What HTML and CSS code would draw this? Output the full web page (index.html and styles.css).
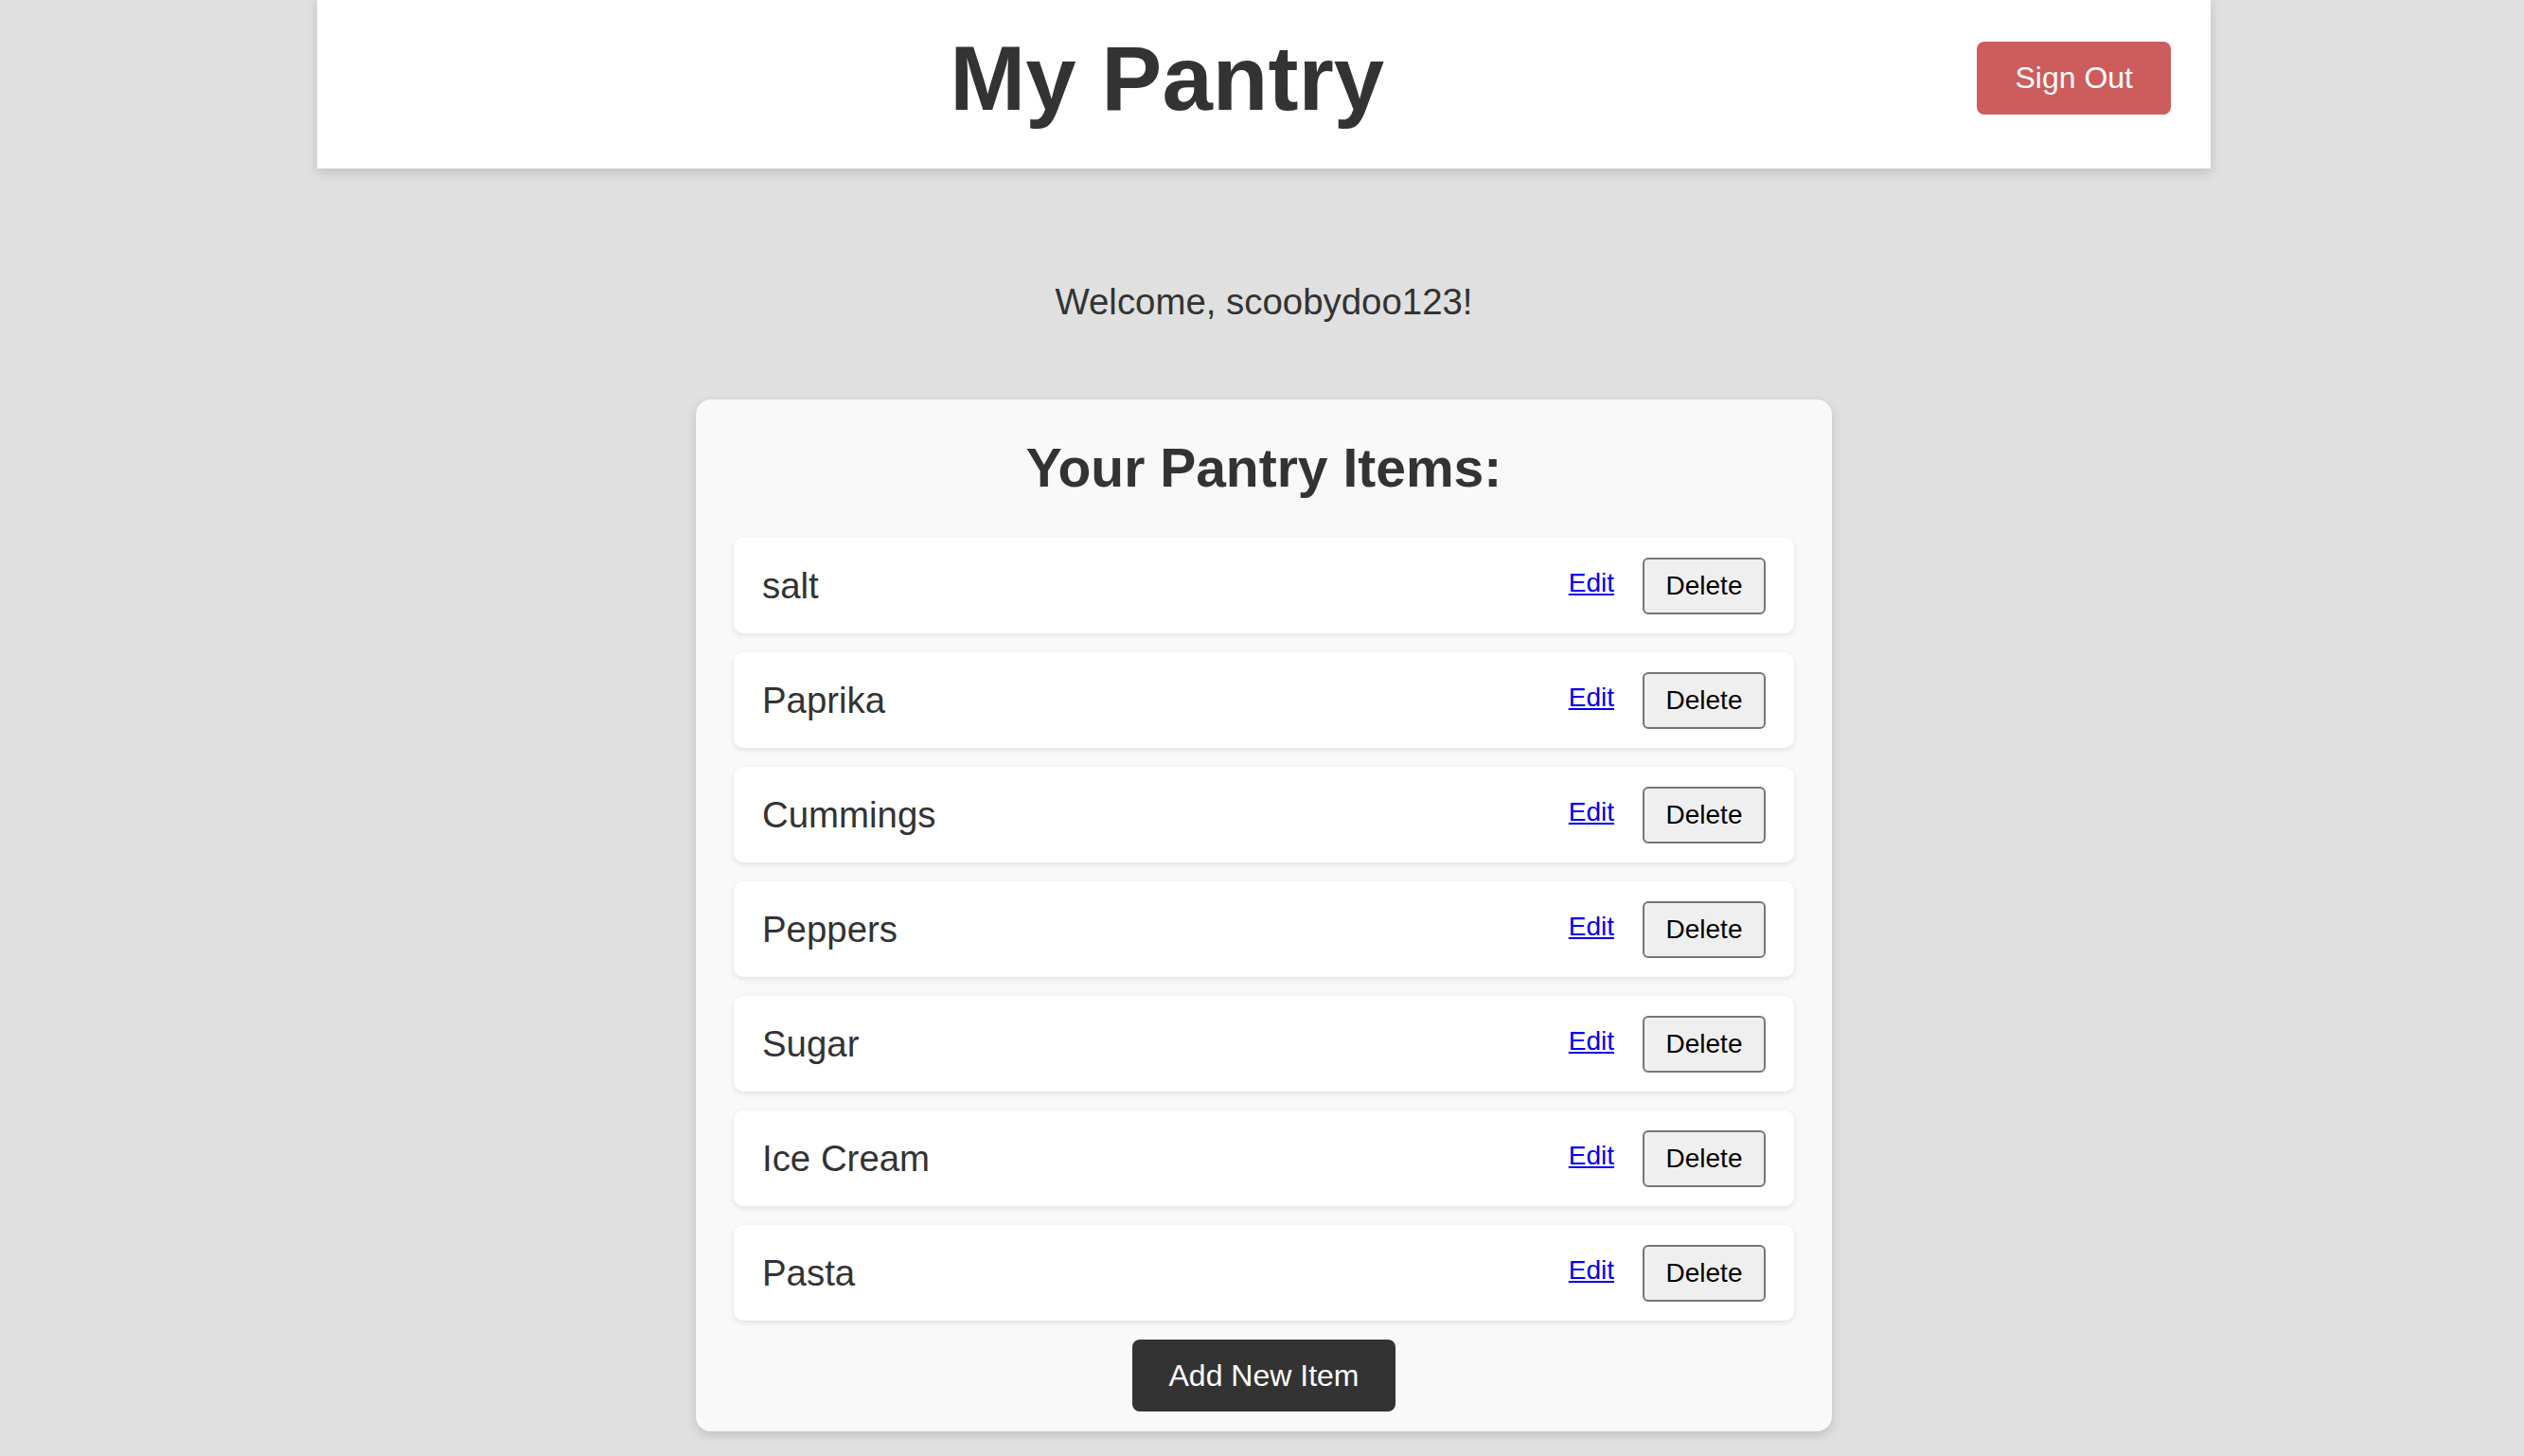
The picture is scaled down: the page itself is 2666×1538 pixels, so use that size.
FILE: index.html
```html
<!DOCTYPE html>
<html lang="en">
<head>
<meta charset="utf-8">
<title>My Pantry</title>
<link rel="stylesheet" href="styles.css">
</head>
<body>
<header class="topbar">
  <div class="spacer"></div>
  <h1 class="title">My Pantry</h1>
  <button class="signout">Sign Out</button>
</header>
<main class="main">
  <p class="welcome">Welcome, scoobydoo123!</p>
  <section class="card">
    <h2 class="card-title">Your Pantry Items:</h2>
    <ul class="items">
      <li class="item"><span class="item-name">salt</span><div class="actions"><a href="#" class="edit">Edit</a><button class="delete">Delete</button></div></li>
      <li class="item"><span class="item-name">Paprika</span><div class="actions"><a href="#" class="edit">Edit</a><button class="delete">Delete</button></div></li>
      <li class="item"><span class="item-name">Cummings</span><div class="actions"><a href="#" class="edit">Edit</a><button class="delete">Delete</button></div></li>
      <li class="item"><span class="item-name">Peppers</span><div class="actions"><a href="#" class="edit">Edit</a><button class="delete">Delete</button></div></li>
      <li class="item"><span class="item-name">Sugar</span><div class="actions"><a href="#" class="edit">Edit</a><button class="delete">Delete</button></div></li>
      <li class="item"><span class="item-name">Ice Cream</span><div class="actions"><a href="#" class="edit">Edit</a><button class="delete">Delete</button></div></li>
      <li class="item"><span class="item-name">Pasta</span><div class="actions"><a href="#" class="edit">Edit</a><button class="delete">Delete</button></div></li>
    </ul>
    <div class="add-wrap"><button class="add">Add New Item</button></div>
  </section>
</main>
</body>
</html>
```
FILE: styles.css
```css
* { box-sizing: border-box; }
html, body {
  margin: 0;
  padding: 0;
  background: #e0e0e0;
  font-family: "Liberation Sans", Arial, Helvetica, sans-serif;
  color: #333;
}
body { padding-left: 4px; }
.topbar {
  width: 2000px;
  margin: 0 auto;
  height: 178px;
  padding: 29px 42px 42px;
  background: #fff;
  display: flex;
  justify-content: space-between;
  align-items: center;
  box-shadow: 0 4px 12px rgba(0,0,0,0.15);
}
.spacer { width: 0; }
.title {
  margin: 0;
  font-size: 96px;
  font-weight: bold;
  color: #333;
  line-height: 107px;
}
.signout {
  background: #cd5c5c;
  color: #fff;
  border: none;
  border-radius: 8px;
  font-family: inherit;
  font-size: 32px;
  padding: 0 40px;
  height: 77px;
}
.main {
  display: flex;
  flex-direction: column;
  align-items: center;
  padding-bottom: 26px;
}
.welcome {
  margin: 119px 0 82px;
  font-size: 38.4px;
  line-height: 43px;
  color: #333;
}
.card {
  width: 1200px;
  background: #f9f9f9;
  border-radius: 16px;
  padding: 20px 40px 21px;
  box-shadow: 0 4px 12px rgba(0,0,0,0.15);
}
.card-title {
  margin: 20px 0 42px;
  text-align: center;
  font-size: 57px;
  line-height: 64px;
  font-weight: bold;
  color: #333;
}
.items {
  list-style: none;
  margin: 0;
  padding: 0;
  display: flex;
  flex-direction: column;
  gap: 20px;
}
.item {
  height: 101px;
  background: #fff;
  border-radius: 10px;
  padding: 0 30px;
  display: flex;
  justify-content: space-between;
  align-items: center;
  box-shadow: 0 2px 6px rgba(0,0,0,0.1);
}
.item-name {
  font-size: 38.4px;
  color: #333;
}
.actions {
  display: flex;
  align-items: center;
  gap: 30px;
}
.edit {
  color: #0000ee;
  font-size: 28px;
  text-decoration: underline;
  position: relative;
  top: -3px;
}
.delete {
  height: 60px;
  width: 130px;
  padding: 0;
  background: #efefef;
  border: 2px solid #767676;
  border-radius: 6px;
  font-family: inherit;
  font-size: 28px;
  color: #000;
}
.add-wrap {
  display: flex;
  justify-content: center;
  margin-top: 20px;
}
.add {
  background: #333;
  color: #fff;
  border: none;
  border-radius: 8px;
  height: 76px;
  padding: 0 39px;
  font-family: inherit;
  font-size: 32px;
}
```
